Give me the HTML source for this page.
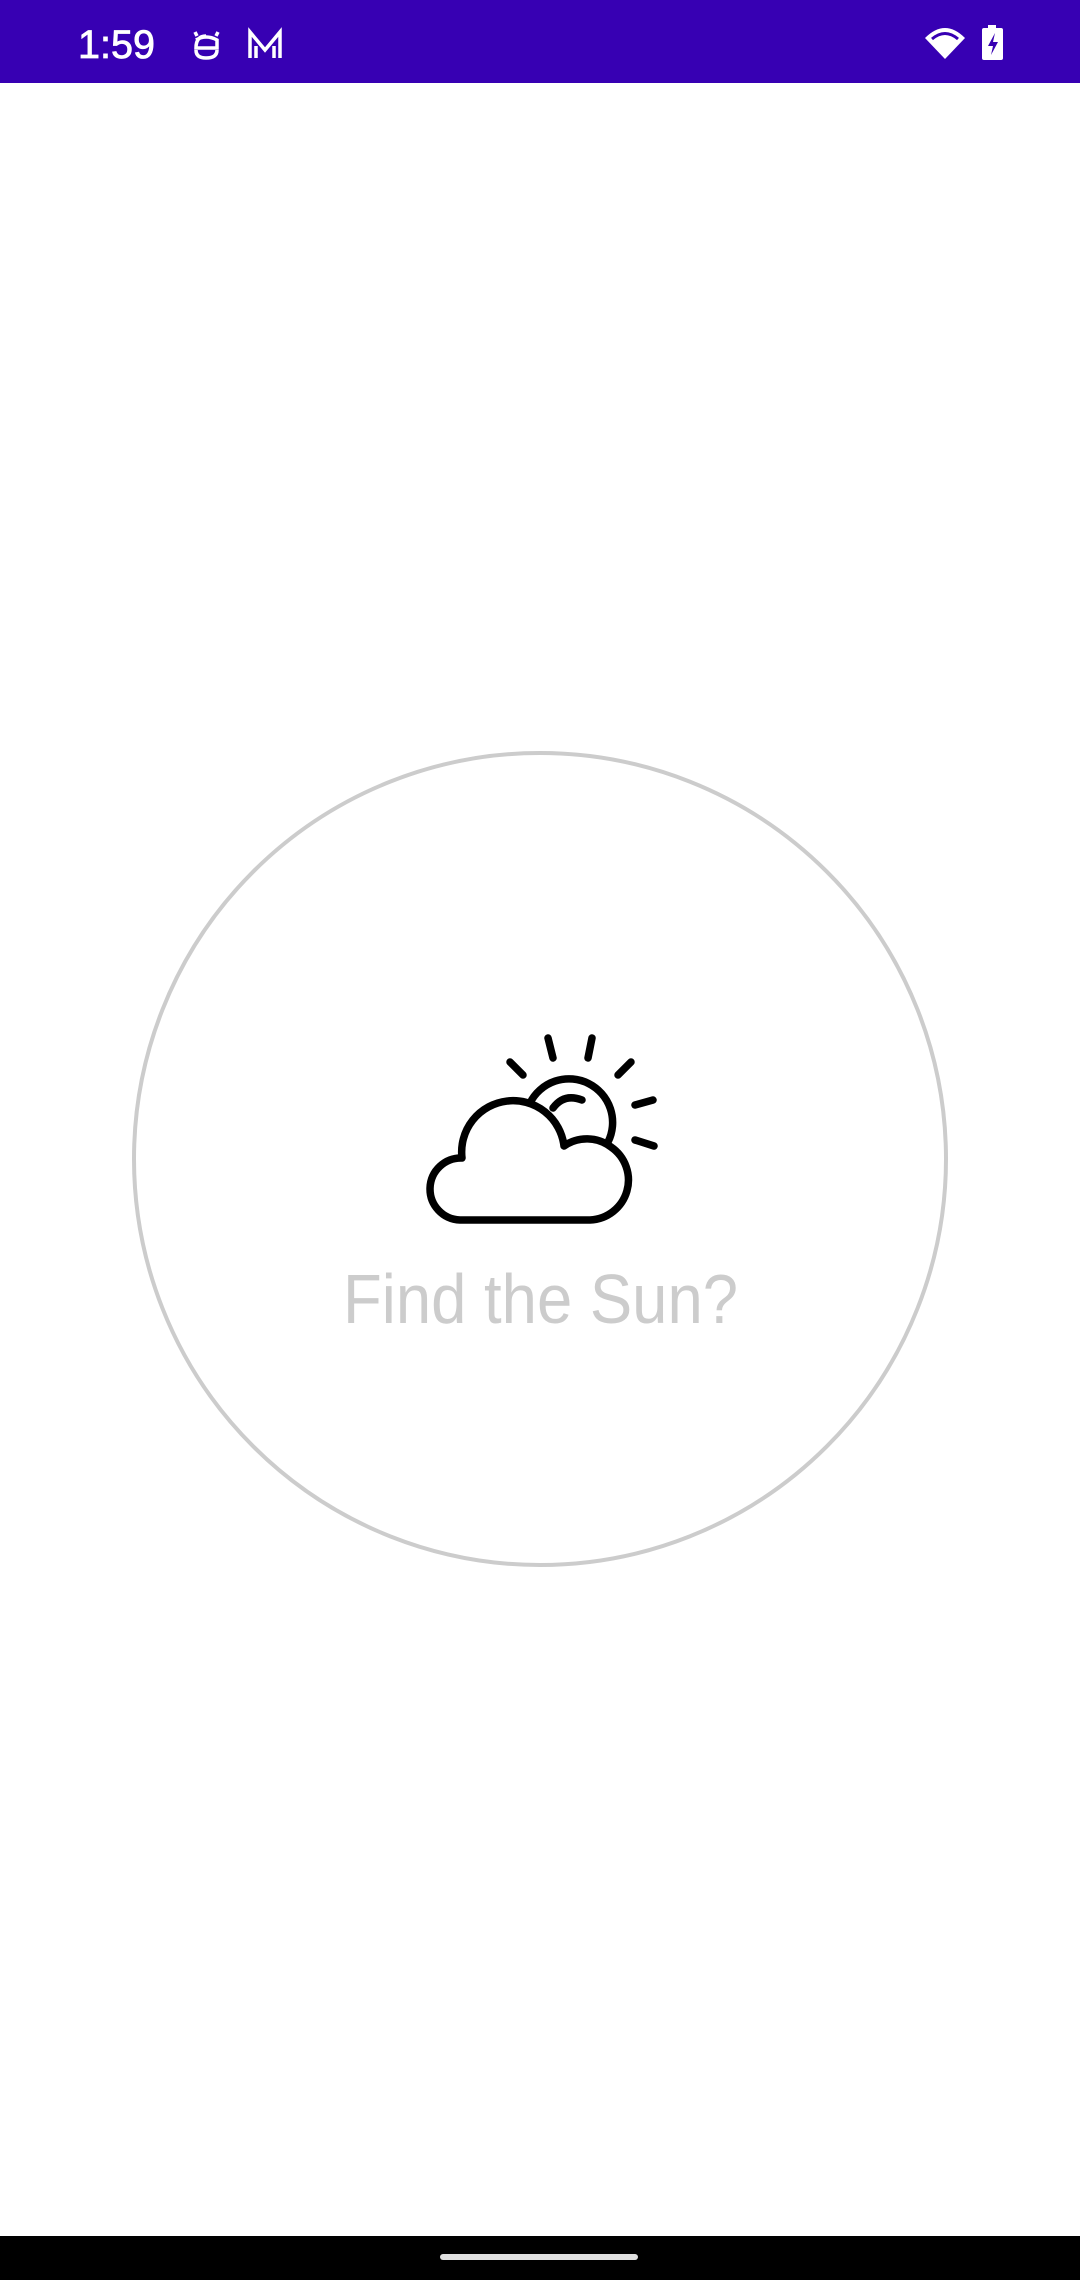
<!DOCTYPE html>
<html><head><meta charset="utf-8"><style>
html,body{margin:0;padding:0;background:#fff;width:1080px;height:2280px;overflow:hidden;font-family:"Liberation Sans",sans-serif}
</style></head><body>
<svg width="1080" height="2280" viewBox="0 0 1080 2280" xmlns="http://www.w3.org/2000/svg" style="position:absolute;left:0;top:0">
<rect x="0" y="0" width="1080" height="83" fill="#3700B3"/>
<text x="78" y="58" font-family="Liberation Sans, sans-serif" font-size="40" fill="#fff" stroke="#fff" stroke-width="0.8" textLength="77" lengthAdjust="spacingAndGlyphs">1:59</text>
<g fill="none" stroke="#fff" stroke-width="3.5">
<path d="M195 32 L197 36 M218 32 L216 36 M196 40 Q206 34 217 40 L217 48 L196 48 Q196 36 206 36 M196 50 Q196 58 206 58 Q217 58 217 50"/>
<path d="M250 58 L250 32 L265 50 L280 32 L280 58 M256 58 L256 46 M274 58 L274 46"/>
</g>
<path d="M925 38 Q945 18 965 38 L945 59 Z" fill="#fff"/>
<path d="M932 39 Q945 28 958 39" fill="none" stroke="#3700B3" stroke-width="3"/>
<rect x="988" y="25" width="8" height="4" fill="#fff"/>
<rect x="982" y="28" width="21" height="32" rx="2" fill="#fff"/>
<path d="M995 33 L988 46 L993 46 L991 55 L998 42 L993 42 Z" fill="#3700B3"/>
<circle cx="540" cy="1159" r="406" fill="none" stroke="#cccccc" stroke-width="4"/>
<g fill="none" stroke="#000" stroke-width="7.5" stroke-linecap="round" stroke-linejoin="round">
<path d="M460 1220 L590 1220 A40 40 0 0 0 611 1147 A40 40 0 0 0 564 1146 A50 50 0 0 0 462 1158 A31 31 0 0 0 460 1220 Z"/>
<path d="M530 1103 A40 40 0 1 1 608 1142"/>
<path d="M553 1108 Q564 1093 582 1100"/>
<path d="M510 1062 L523 1075 M548 1038 L553 1058 M592 1038 L588 1058 M631 1062 L618 1075 M635 1105 L653 1100 M635 1140 L654 1146"/>
</g>
<text x="343" y="1323" font-family="Liberation Sans, sans-serif" font-size="70" fill="#cccccc" textLength="395" lengthAdjust="spacingAndGlyphs">Find the Sun?</text>
<rect x="0" y="2236" width="1080" height="44" fill="#000"/>
<rect x="440" y="2254" width="198" height="6" rx="3" fill="#e0e0e0"/>
</svg>
</body></html>
